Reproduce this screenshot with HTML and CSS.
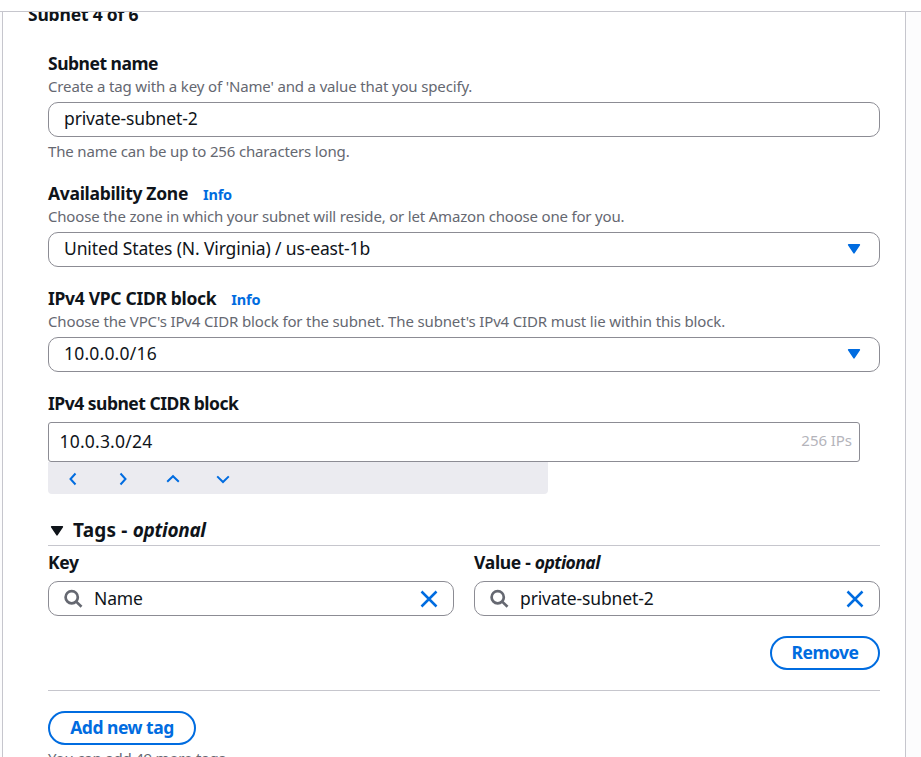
FILE: index.html
```
<!DOCTYPE html>
<html lang="en">
<head><meta charset="utf-8"><title>Create subnet</title><link rel="stylesheet" href="styles.css"></head>
<body>
<header class="topbar"></header>
<main class="panel">
  <h3 class="heading">Subnet 4 of 6</h3>
  <section class="form">
    <div class="field name">
      <div class="label tight">Subnet name</div>
      <div class="desc">Create a tag with a key of 'Name' and a value that you specify.</div>
      <div class="input">private-subnet-2</div>
      <div class="hint">The name can be up to 256 characters long.</div>
    </div>
    <div class="field zone">
      <div class="label">Availability Zone<a class="info">Info</a></div>
      <div class="desc snug">Choose the zone in which your subnet will reside, or let Amazon choose one for you.</div>
      <div class="input select"><span>United States (N. Virginia) / us-east-1b</span><svg class="caret" viewBox="0 0 14 12"><path d="M1.6 1.8h10.8L7 9.9z"/></svg></div>
    </div>
    <div class="field vpc">
      <div class="label">IPv4 VPC CIDR block<a class="info">Info</a></div>
      <div class="desc">Choose the VPC's IPv4 CIDR block for the subnet. The subnet's IPv4 CIDR must lie within this block.</div>
      <div class="input select"><span class="ip">10.0.0.0/16</span><svg class="caret" viewBox="0 0 14 12"><path d="M1.6 1.8h10.8L7 9.9z"/></svg></div>
    </div>
    <div class="field cidr">
      <div class="label tight">IPv4 subnet CIDR block</div>
      <div class="cidr-box"><span class="ip">10.0.3.0/24</span><span class="ips">256 IPs</span></div>
      <div class="stepper">
        <svg viewBox="0 0 14 14"><path d="M9.5 1.5 4.5 7l5 5.5"/></svg>
        <svg viewBox="0 0 14 14"><path d="m4.5 1.5 5 5.5-5 5.5"/></svg>
        <svg viewBox="0 0 14 14"><path d="m1.2 9.8 5.8-5.6 5.8 5.6"/></svg>
        <svg viewBox="0 0 14 14"><path d="m1.2 4.4 5.8 5.6 5.8-5.6"/></svg>
      </div>
    </div>
    <div class="tags-title"><svg class="caret dark" viewBox="0 0 14 12"><path d="M1.6 1.8h10.8L7 9.9z"/></svg><span>Tags - <i>optional</i></span></div>
    <div class="tag-row">
      <div>
        <div class="label">Key</div>
        <div class="input search"><svg class="lens" viewBox="0 0 20 20"><circle cx="7.7" cy="8.2" r="6.1"/><path d="m12.2 12.6 5.3 5.2"/></svg><span>Name</span><svg class="clear" viewBox="0 0 18 18"><path d="m1.5 1.5 15 15m0-15-15 15"/></svg></div>
      </div>
      <div>
        <div class="label">Value - <i>optional</i></div>
        <div class="input search"><svg class="lens" viewBox="0 0 20 20"><circle cx="7.7" cy="8.2" r="6.1"/><path d="m12.2 12.6 5.3 5.2"/></svg><span>private-subnet-2</span><svg class="clear" viewBox="0 0 18 18"><path d="m1.5 1.5 15 15m0-15-15 15"/></svg></div>
      </div>
    </div>
    <div class="remove-row"><button class="btn remove">Remove</button></div>
    <button class="btn add">Add new tag</button>
    <div class="more">You can add 49 more tags.</div>
  </section>
</main>
</body>
</html>
```
FILE: styles.css
```
* { box-sizing: border-box; }
body { margin: 0; height: 757px; overflow: hidden; background: #fcfcfd; color: #0f141a; font: 17.5px/24px "Noto Sans", sans-serif; letter-spacing: -0.13px; }
.topbar { height: 12px; background: #fff; border-bottom: 1px solid #c6c6cd; }
.panel { height: 745px; width: 904px; margin-left: 2px; background: #fff; border: solid #c6c6cd; border-width: 0 1px; overflow: hidden; padding-left: 25px; }
.heading { margin: -10px 0 0; font-size: 17.5px; line-height: 24px; height: 24px; letter-spacing: -0.2px; }
.form { margin: 25px 0 0 20px; width: 832px; }
.field { display: flex; flex-direction: column; }
.name { height: 130px; }
.zone, .vpc { height: 105px; }
.cidr { height: 125px; }
.label { height: 24px; font-weight: 700; font-size: 17.5px; line-height: 24px; white-space: nowrap; letter-spacing: -0.31px; }
.tight { letter-spacing: -0.5px; }
.info { margin-left: 15px; font-size: 14.5px; color: #006ce0; letter-spacing: -0.2px; }
.desc, .hint, .more { font-size: 15px; line-height: 20px; color: #656871; white-space: nowrap; letter-spacing: -0.15px; }
.desc { height: 27px; padding-top: 1px; }
.snug { letter-spacing: -0.19px; }
.hint { margin-top: 4px; }
.input { height: 35px; flex: none; border: 1px solid #8c8c94; border-radius: 10px; padding: 0 15px 3px; display: flex; align-items: center; line-height: 24px; white-space: nowrap; }
.select { justify-content: space-between; }
.ip { letter-spacing: 0.2px; }
.caret { width: 14px; height: 12px; fill: #006ce0; stroke: #006ce0; stroke-width: 1.5; stroke-linejoin: round; margin: 2px 3px 0 0; }
.dark { fill: #0f141a; stroke: #0f141a; margin: 1px 9px 0 0; }
.cidr-box { width: 812px; height: 40px; margin-top: 7px; flex: none; border: 1px solid #8c8c94; border-radius: 3px; padding: 0 7px 2px 10.5px; display: flex; align-items: center; justify-content: space-between; }
.ips { color: #b4b4bb; font-size: 15px; letter-spacing: -0.05px; line-height: 20px; padding-bottom: 2px; }
.stepper { width: 500px; height: 32px; background: #ebebf0; border-radius: 0 0 4px 4px; display: flex; align-items: center; gap: 36px; padding: 2px 0 0 18px; }
.stepper svg { width: 14px; height: 14px; fill: none; stroke: #006ce0; stroke-width: 2; }
.tags-title { height: 30px; border-bottom: 1px solid #c6c6cd; font-size: 19px; font-weight: 700; display: flex; align-items: center; padding: 0 0 1px 2px; letter-spacing: 0.2px; }
.tags-title i { letter-spacing: -0.3px; }
.tag-row { display: grid; grid-template-columns: 1fr 1fr; gap: 20px; padding-top: 4px; }
.tag-row .label { height: 31px; }
.tag-row .label i { letter-spacing: -0.55px; }
.search { padding-bottom: 2px; }
.search span { flex: 1; }
.lens { width: 20px; height: 20px; fill: none; stroke: #656871; stroke-width: 2.7; margin-right: 10px; position: relative; top: 1px; }
.clear { width: 18px; height: 18px; fill: none; stroke: #006ce0; stroke-width: 2.5; position: relative; top: 1px; }
.remove-row { display: flex; justify-content: flex-end; padding: 20px 0; height: 75px; border-bottom: 1px solid #c6c6cd; margin-bottom: 20px; }
.btn { font: 700 17.5px/24px "Noto Sans", sans-serif; letter-spacing: -0.48px; color: #006ce0; background: #fff; border: 2px solid #006ce0; border-radius: 20px; height: 34px; padding: 0 0 2px; }
.remove { width: 110px; }
.add { width: 148px; display: block; }
.more { margin-top: 3px; letter-spacing: -0.2px; }
```
